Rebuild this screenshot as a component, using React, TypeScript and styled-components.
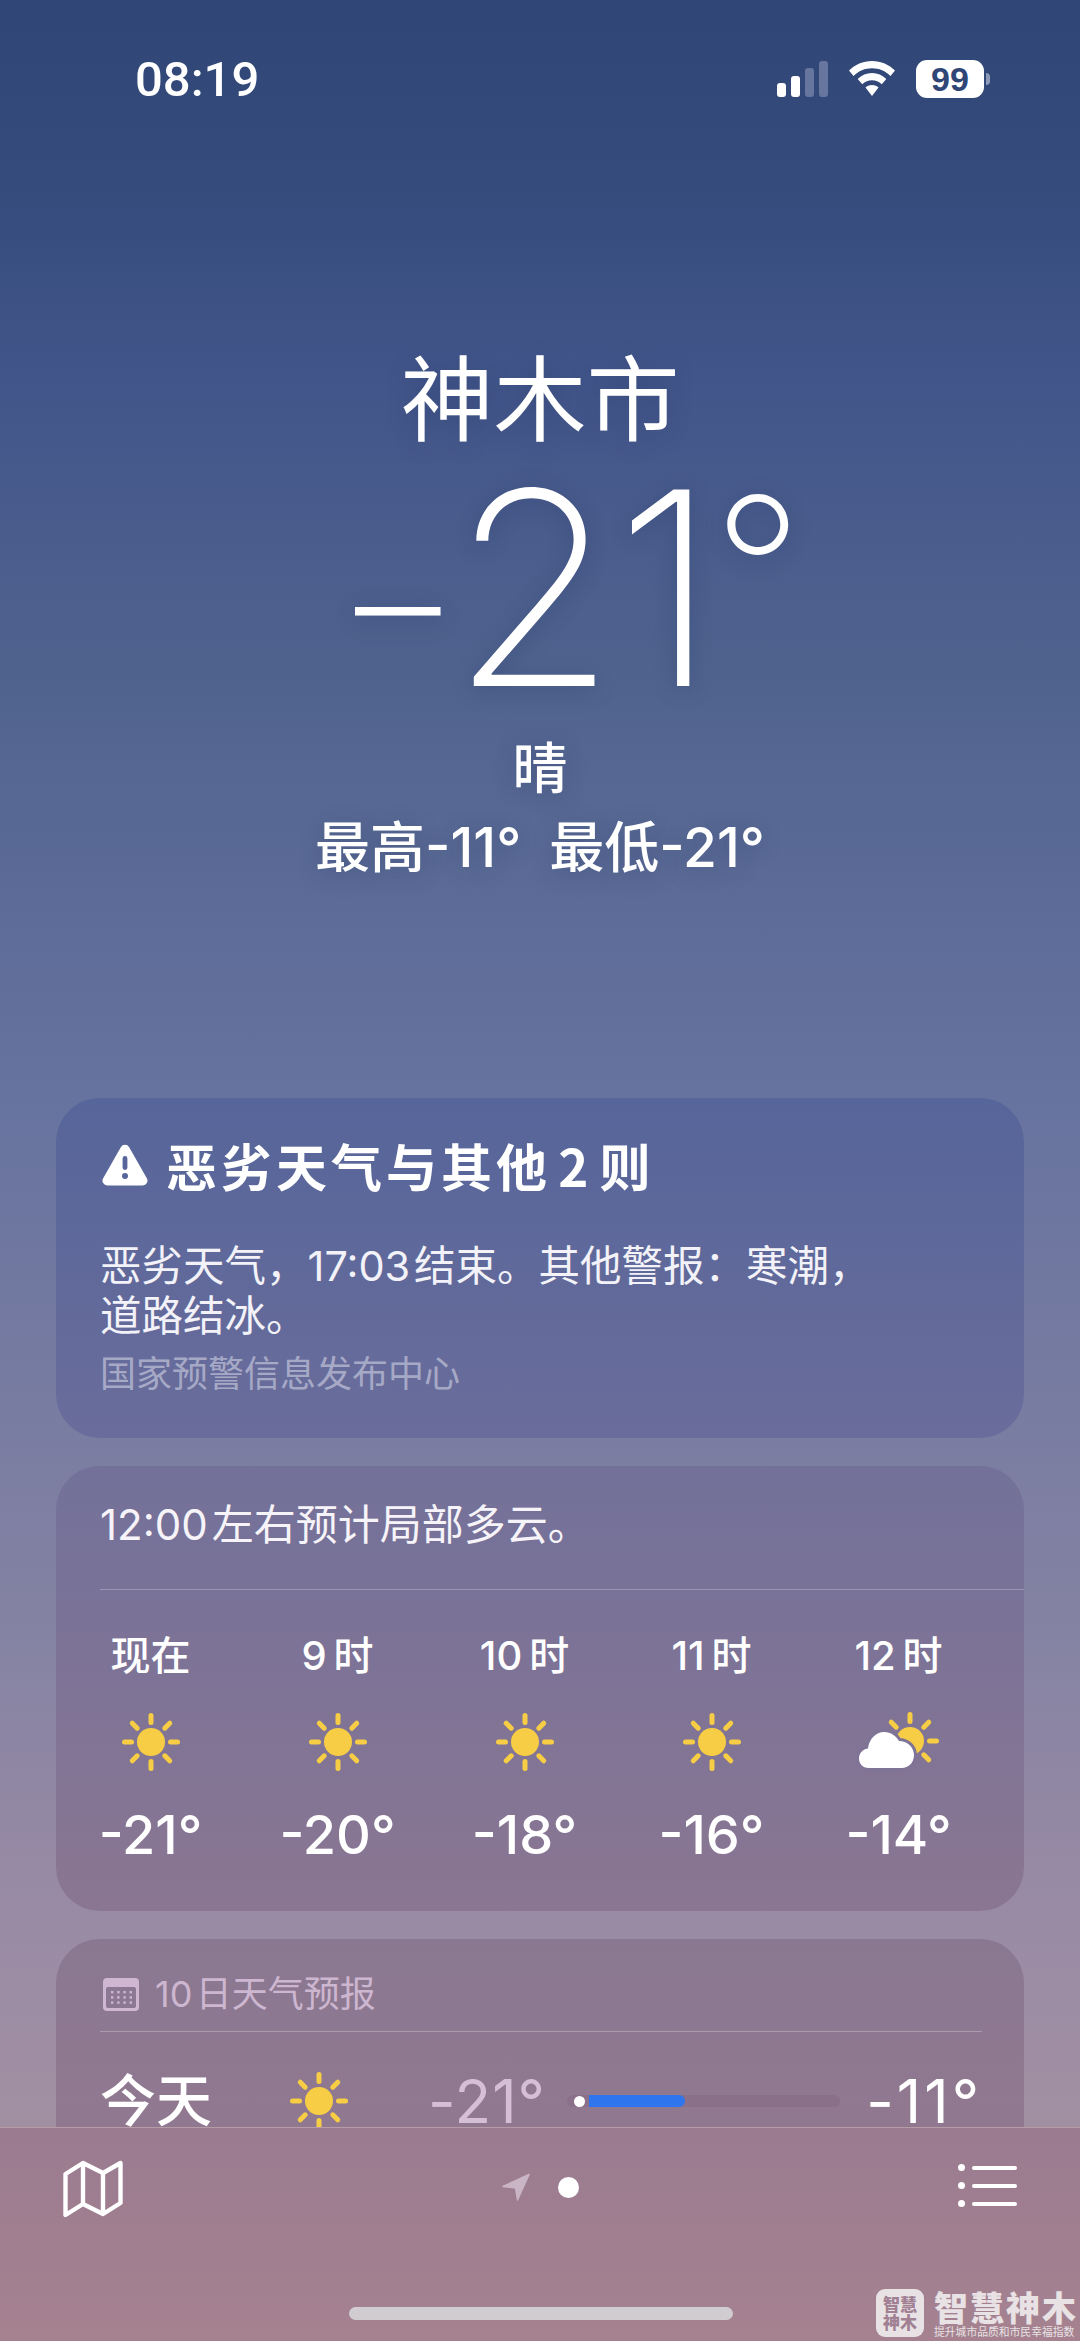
import React from "react";
import styled, { createGlobalStyle } from "styled-components";

const latin = `Inter, "Noto Sans CJK SC", sans-serif`;

const GlobalStyle = createGlobalStyle`
  html, body {
    margin: 0;
    padding: 0;
    background: #2f4676;
  }
  * {
    box-sizing: border-box;
  }
`;

const hours = [
  { label: "现在", temp: "-21°", cloudy: false },
  { label: "9\u2009时", temp: "-20°", cloudy: false },
  { label: "10\u2009时", temp: "-18°", cloudy: false },
  { label: "11\u2009时", temp: "-16°", cloudy: false },
  { label: "12\u2009时", temp: "-14°", cloudy: true },
];

const Rays = ({ cx, cy, skip = [] }: { cx: number; cy: number; skip?: number[] }) => (
  <>
    {[0, 45, 90, 135, 180, 225, 270, 315]
      .filter((a) => !skip.includes(a))
      .map((a) => (
        <line
          key={a}
          x1={cx}
          y1={cy - 19.5}
          x2={cx}
          y2={cy - 26.5}
          stroke="#f7cd45"
          strokeWidth="5"
          strokeLinecap="round"
          transform={`rotate(${a} ${cx} ${cy})`}
        />
      ))}
  </>
);

const SunIcon = () => (
  <svg width="60" height="60" viewBox="0 0 60 60">
    <circle cx="30" cy="30" r="14" fill="#f7cd45" />
    <Rays cx={30} cy={30} />
  </svg>
);

const cloudPath =
  "M12 56 C5 56 2 51 2 46.5 C2 41 6 37 11 36.5 C12 27 19 20 27 20 C34 20 39 24 42 29 C50 29 57 35 57 43 C57 51 51 56 45 56 Z";

const CloudSunIcon = () => (
  <svg width="84" height="60" viewBox="0 0 84 60">
    <circle cx="53" cy="29" r="14" fill="#f7cd45" />
    <Rays cx={53} cy={29} skip={[180, 225, 270]} />
    <path d={cloudPath} fill="#fff" stroke="#7f7396" strokeWidth="6" />
    <path d={cloudPath} fill="#fff" />
  </svg>
);

const WarningIcon = () => (
  <svg width="46" height="42" viewBox="0 0 46 42">
    <path
      d="M18.8 3.2 a4.8 4.8 0 0 1 8.4 0 l17.600 31 a4.800 4.800 0 0 1 -4.200 7.300 H5.400 a4.800 4.800 0 0 1 -4.200 -7.300 z"
      fill="#fff"
    />
    <rect x="20.6" y="12" width="4.8" height="14" rx="2.4" fill="#56659a" />
    <circle cx="23" cy="32" r="3" fill="#56659a" />
  </svg>
);

const CalendarIcon = () => (
  <svg width="36" height="33" viewBox="0 0 36 33">
    <path d="M4 0 H32 a4 4 0 0 1 4 4 V29 a4 4 0 0 1 -4 4 H4 a4 4 0 0 1 -4 -4 V4 a4 4 0 0 1 4 -4 z" fill="#cfb6d1" />
    <rect x="3" y="9" width="30" height="21" rx="2" fill="#8c7892" />
    {[0, 1, 2, 3].map((c) =>
      [0, 1, 2].map((r) => (
        <rect key={`${c}-${r}`} x={8 + c * 6.2} y={13 + r * 5.2} width="2.4" height="2.4" fill="#cfb6d1" />
      ))
    )}
  </svg>
);

const MapIcon = () => (
  <svg width="60" height="58" viewBox="0 0 60 58">
    <path
      d="M2.5 14 L20 3 L40 13 L57.5 3 V43 L40 54 L20 44 L2.500 55 Z M20 3 V44 M40 13 V54"
      fill="none"
      stroke="#fff"
      strokeWidth="4.4"
      strokeLinejoin="round"
    />
  </svg>
);

const ArrowIcon = () => (
  <svg width="28" height="28" viewBox="0 0 28 28">
    <path d="M27 1.500 L1 13.500 L13.500 15 L15.500 27 Z" fill="#c9b5c6" stroke="#c9b5c6" strokeWidth="1.5" strokeLinejoin="round" />
  </svg>
);

const WifiIcon = () => (
  <svg width="48" height="36" viewBox="0 0 48 36">
    <path d="M24 0 C33 0 41 3.600 47 9.500 L42.500 15 C37.500 10 31 7.300 24 7.300 C17 7.300 10.500 10 5.500 15 L1 9.500 C7 3.600 15 0 24 0 Z" fill="#fff" />
    <path d="M24 12 C29.500 12 34.500 14.200 38.300 18 L33.800 23.300 C31 20.800 27.700 19.300 24 19.300 C20.300 19.300 17 20.800 14.200 23.300 L9.700 18 C13.500 14.200 18.500 12 24 12 Z" fill="#fff" />
    <path d="M24 24 C26.800 24 29 25 30.500 26.500 L24 35 L17.500 26.500 C19 25 21.200 24 24 24 Z" fill="#fff" />
  </svg>
);

export default function App() {
  return (
    <Screen>
      <GlobalStyle />
      <StatusBar>
        <Clock>08:19</Clock>
        <StatusIcons>
          <SignalBars>
            <SignalBar $height={14} />
            <SignalBar $height={21} />
            <SignalBar $height={29} $dim />
            <SignalBar $height={36} $dim />
          </SignalBars>
          <WifiIcon />
          <Battery>
            <BatteryBody>99</BatteryBody>
            <BatteryNub />
          </Battery>
        </StatusIcons>
      </StatusBar>

      <Header>
        <City>神木市</City>
        <BigTemp>
          <TempMinus>−</TempMinus>21<TempDegree>°</TempDegree>
        </BigTemp>
        <Condition>晴</Condition>
        <HighLow>
          <span>最高-11°</span>
          <span>最低-21°</span>
        </HighLow>
      </Header>

      <Cards>
        <AlertCard>
          <AlertTitle>
            <WarningIcon />
            <span>恶劣天气与其他{"\u200A"}2{"\u200A"}则</span>
          </AlertTitle>
          <AlertBody>
            恶劣天气，17:03{"\u200A"}结束。其他警报：寒潮，
            <br />
            道路结冰。
          </AlertBody>
          <AlertSource>国家预警信息发布中心</AlertSource>
        </AlertCard>

        <HourlyCard>
          <HourlySummary>12:00{"\u200A"}左右预计局部多云。</HourlySummary>
          <HourlyDivider />
          <HourGrid>
            {hours.map((h) => (
              <HourCol key={h.label}>
                <HourLabel>{h.label}</HourLabel>
                <HourIcon>{h.cloudy ? <CloudSunIcon /> : <SunIcon />}</HourIcon>
                <HourTemp>{h.temp}</HourTemp>
              </HourCol>
            ))}
          </HourGrid>
        </HourlyCard>

        <ForecastCard>
          <ForecastHead>
            <CalendarIcon />
            <span>10{"\u200A"}日天气预报</span>
          </ForecastHead>
          <ForecastDivider />
          <DayRow>
            <DayName>今天</DayName>
            <DayIcon>
              <SunIcon />
            </DayIcon>
            <DayLow>-21°</DayLow>
            <RangeTrack>
              <RangeFill />
              <RangeDot />
            </RangeTrack>
            <DayHigh>-11°</DayHigh>
          </DayRow>
        </ForecastCard>
      </Cards>

      <TabBar>
        <MapIcon />
        <PageDots>
          <ArrowIcon />
          <PageDot />
        </PageDots>
        <ListIcon>
          {[0, 1, 2].map((i) => (
            <ListRow key={i}>
              <ListBullet />
              <ListLine />
            </ListRow>
          ))}
        </ListIcon>
        <HomeIndicator />
        <Watermark>
          <WatermarkLogo>
            智慧
            <br />
            神木
          </WatermarkLogo>
          <WatermarkText>
            <WatermarkName>智慧神木</WatermarkName>
            <WatermarkSlogan>提升城市品质和市民幸福指数</WatermarkSlogan>
          </WatermarkText>
        </Watermark>
      </TabBar>
    </Screen>
  );
}

const Screen = styled.div`
  position: relative;
  width: 1080px;
  height: 2341px;
  overflow: hidden;
  color: #fff;
  font-family: ${latin};
  background: linear-gradient(
    180deg,
    #2f4676 0%,
    #354b7c 8%,
    #42558a 16%,
    #51648f 30%,
    #67739f 47%,
    #8583a3 70%,
    #9a8ba5 82%,
    #a9949f 100%
  );
`;

const StatusBar = styled.div`
  height: 160px;
  padding: 56px 90px 0 135px;
  display: flex;
  justify-content: space-between;
  align-items: flex-start;
`;

const Clock = styled.div`
  font-family: Roboto, sans-serif;
  font-size: 49px;
  line-height: 46px;
  font-weight: 500;
  margin-top: 1px;
`;

const StatusIcons = styled.div`
  display: flex;
  align-items: center;
  gap: 20px;
  height: 40px;
  margin-top: 3px;
`;

const SignalBars = styled.div`
  display: flex;
  align-items: flex-end;
  gap: 5px;
  height: 36px;
`;

const SignalBar = styled.div<{ $height: number; $dim?: boolean }>`
  width: 9px;
  height: ${(p) => p.$height}px;
  border-radius: 3px;
  background: ${(p) => (p.$dim ? "#66769f" : "#fff")};
`;

const Battery = styled.div`
  display: flex;
  align-items: center;
  gap: 2px;
`;

const BatteryBody = styled.div`
  width: 68px;
  height: 38px;
  border-radius: 11px;
  background: #fff;
  color: #2f4676;
  font-family: "Liberation Sans", sans-serif;
  font-size: 34px;
  font-weight: 700;
  line-height: 38px;
  text-align: center;
`;

const BatteryNub = styled.div`
  width: 4px;
  height: 12px;
  border-radius: 0 6px 6px 0;
  background: #8c9ab8;
`;

const Header = styled.div`
  display: flex;
  flex-direction: column;
  align-items: center;
  height: 938px;
  text-shadow: 0 4px 22px rgba(30, 45, 90, 0.28);
`;

const City = styled.div`
  margin-top: 180px;
  font-family: "Noto Sans CJK SC", sans-serif;
  font-size: 93px;
  line-height: 108px;
  font-weight: 400;
`;

const BigTemp = styled.div`
  margin-top: -5px;
  height: 290px;
  font-size: 270px;
  line-height: 290px;
  font-weight: 200;
  letter-spacing: -2px;
  white-space: nowrap;
  padding-left: 54px;
`;

const TempMinus = styled.span`
  font-size: 200px;
  line-height: 0;
  vertical-align: 18px;
  margin-right: -10px;
`;

const TempDegree = styled.span`
  font-size: 198px;
  line-height: 0;
  vertical-align: 46px;
  margin-left: -3px;
`;

const Condition = styled.div`
  margin-top: -1px;
  font-size: 55px;
  line-height: 64px;
  font-weight: 500;
  font-family: "Noto Sans CJK SC", sans-serif;
`;

const HighLow = styled.div`
  display: flex;
  gap: 28px;
  margin-top: 19px;
  font-size: 55px;
  line-height: 64px;
  font-weight: 500;
`;

const Cards = styled.div`
  display: flex;
  flex-direction: column;
  gap: 28px;
  padding: 0 56px;
`;

const Card = styled.div`
  border-radius: 44px;
  overflow: hidden;
`;

const AlertCard = styled(Card)`
  height: 340px;
  padding: 34px 44px 0;
  background: linear-gradient(180deg, #56659a, #6a6d9b);
`;

const AlertTitle = styled.div`
  display: flex;
  align-items: center;
  gap: 18px;
  font-size: 51px;
  line-height: 66px;
  font-weight: 700;
  letter-spacing: 4px;
  padding-left: 2px;
  font-family: "Noto Sans CJK SC", "Inter", sans-serif;
`;

const AlertBody = styled.div`
  margin-top: 43px;
  font-size: 41.5px;
  line-height: 50px;
  color: #f2f2f8;
`;

const AlertSource = styled.div`
  margin-top: 8px;
  font-size: 36px;
  line-height: 50px;
  color: #a6a9c6;
`;

const HourlyCard = styled(Card)`
  height: 445px;
  padding-top: 31px;
  background: linear-gradient(180deg, #73719a, #8a7692);
`;

const HourlySummary = styled.div`
  margin-left: 44px;
  font-size: 42px;
  line-height: 56px;
  color: #f6f4f8;
`;

const HourlyDivider = styled.div`
  height: 1px;
  margin: 36px 0 0 44px;
  background: rgba(255, 255, 255, 0.25);
`;

const HourGrid = styled.div`
  display: grid;
  grid-template-columns: repeat(5, 187px);
  padding: 41px 0 0 1px;
`;

const HourCol = styled.div`
  display: flex;
  flex-direction: column;
  align-items: center;
`;

const HourLabel = styled.div`
  font-size: 40px;
  line-height: 50px;
  font-weight: 500;
`;

const HourIcon = styled.div`
  height: 60px;
  margin-top: 31px;
  display: flex;
  align-items: center;
  justify-content: center;
`;

const HourTemp = styled.div`
  margin-top: 28px;
  font-size: 54px;
  line-height: 70px;
  font-weight: 500;
`;

const ForecastCard = styled(Card)`
  height: 400px;
  padding: 33px 42px 0 44px;
  background: linear-gradient(180deg, #8a7891, #97798f);
`;

const ForecastHead = styled.div`
  display: flex;
  align-items: center;
  gap: 16px;
  padding-left: 3px;
  font-size: 36px;
  line-height: 44px;
  font-weight: 400;
  color: #cdb6d0;
`;

const ForecastDivider = styled.div`
  height: 1px;
  margin-top: 15px;
  background: rgba(255, 255, 255, 0.25);
`;

const DayRow = styled.div`
  display: flex;
  align-items: center;
  height: 70px;
  margin-top: 34px;
`;

const DayName = styled.div`
  width: 189px;
  height: 70px;
  font-size: 56px;
  line-height: 62px;
  font-weight: 500;
  font-family: "Noto Sans CJK SC", sans-serif;
`;

const DayIcon = styled.div`
  width: 60px;
  height: 60px;
`;

const DayLow = styled.div`
  width: 218px;
  padding-left: 79px;
  font-size: 60px;
  letter-spacing: 1px;
  font-weight: 400;
  white-space: nowrap;
  color: #d5bfd6;
`;

const RangeTrack = styled.div`
  position: relative;
  width: 273px;
  height: 12px;
  border-radius: 6px;
  background: #8a7088;
`;

const RangeFill = styled.div`
  position: absolute;
  left: 22px;
  top: 0;
  width: 96px;
  height: 12px;
  border-radius: 0 6px 6px 0;
  background: #2f76ee;
`;

const RangeDot = styled.div`
  position: absolute;
  left: 7px;
  top: 1px;
  width: 11px;
  height: 11px;
  border-radius: 50%;
  background: #fff;
`;

const DayHigh = styled.div`
  margin-left: auto;
  font-size: 60px;
  letter-spacing: 3px;
  font-weight: 400;
  white-space: nowrap;
`;

const TabBar = styled.div`
  position: absolute;
  left: 0;
  right: 0;
  bottom: 0;
  height: 214px;
  padding: 32px 63px 0;
  display: flex;
  justify-content: space-between;
  align-items: flex-start;
  border-top: 1px solid rgba(255, 255, 255, 0.2);
  background: linear-gradient(180deg, #9a7b90, #a68290);
`;

const PageDots = styled.div`
  position: absolute;
  left: 502px;
  top: 45px;
  display: flex;
  align-items: center;
  gap: 28px;
`;

const PageDot = styled.div`
  width: 21px;
  height: 21px;
  border-radius: 50%;
  background: #fff;
`;

const ListIcon = styled.div`
  display: flex;
  flex-direction: column;
  gap: 13px;
  margin-top: 5px;
`;

const ListRow = styled.div`
  display: flex;
  align-items: center;
  gap: 7px;
  height: 5px;
`;

const ListBullet = styled.div`
  width: 7px;
  height: 7px;
  border-radius: 50%;
  background: #fff;
`;

const ListLine = styled.div`
  width: 45px;
  height: 4px;
  border-radius: 2px;
  background: #fff;
`;

const HomeIndicator = styled.div`
  position: absolute;
  left: 349px;
  bottom: 21px;
  width: 384px;
  height: 13px;
  border-radius: 7px;
  background: #d0cccf;
`;

const Watermark = styled.div`
  position: absolute;
  left: 876px;
  top: 161px;
  display: flex;
  gap: 10px;
`;

const WatermarkLogo = styled.div`
  width: 48px;
  height: 48px;
  padding-top: 6px;
  border-radius: 9px;
  background: #e8e2e5;
  color: #a08092;
  font-family: "Noto Sans CJK SC", sans-serif;
  font-size: 17px;
  font-weight: 900;
  line-height: 18px;
  text-align: center;
`;

const WatermarkText = styled.div`
  display: flex;
  flex-direction: column;
  color: #e8e2e5;
  font-family: "Noto Sans CJK SC", sans-serif;
`;

const WatermarkName = styled.div`
  font-size: 34px;
  line-height: 36px;
  font-weight: 900;
  letter-spacing: 2px;
  white-space: nowrap;
`;

const WatermarkSlogan = styled.div`
  font-size: 10.8px;
  line-height: 12px;
  white-space: nowrap;
`;
